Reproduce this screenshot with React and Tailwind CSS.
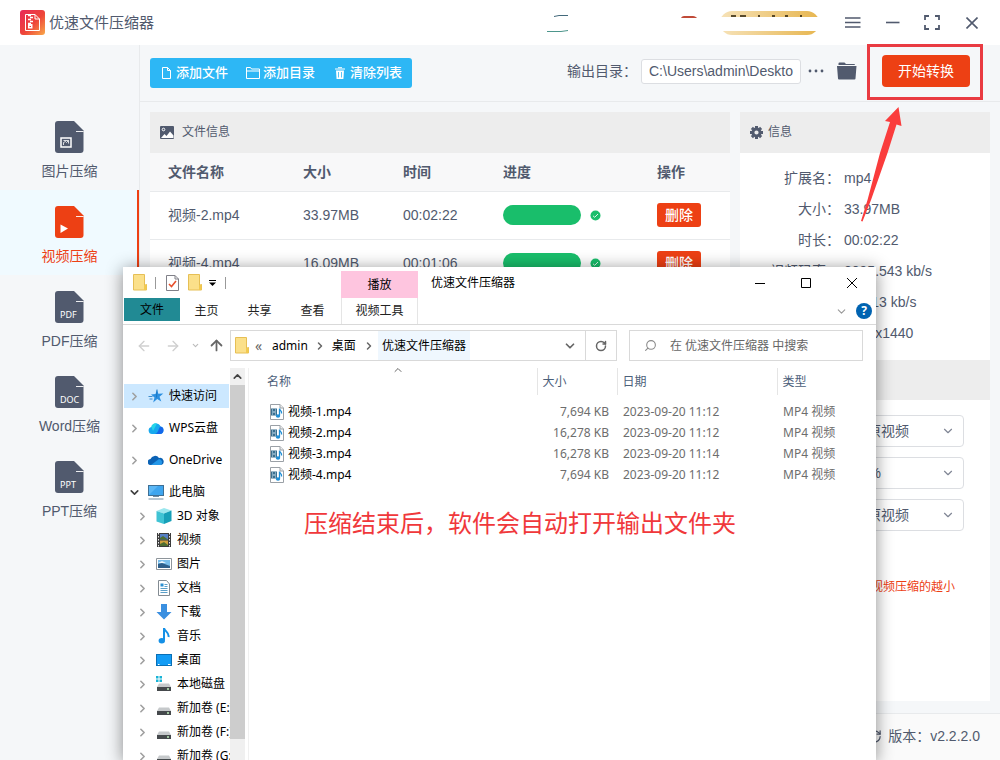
import { useState } from "react";
import {
  ArrowLeft,
  ArrowRight,
  ArrowUp,
  ChevronDown,
  ChevronRight,
  ChevronUp,
  RotateCw,
  RefreshCw,
  Search,
} from "lucide-react";

const sideItems = [
  { name: "图片压缩", kind: "image" },
  { name: "视频压缩", kind: "video" },
  { name: "PDF压缩", kind: "PDF" },
  { name: "Word压缩", kind: "DOC" },
  { name: "PPT压缩", kind: "PPT" },
];

const queue = [
  { name: "视频-2.mp4", size: "33.97MB", time: "00:02:22" },
  { name: "视频-4.mp4", size: "16.09MB", time: "00:01:06" },
];

const info = [
  ["扩展名", "mp4"],
  ["大小", "33.97MB"],
  ["时长", "00:02:22"],
  ["视频码率", "2095.543 kb/s"],
  ["音频码率", "128.13 kb/s"],
  ["分辨率", "2560x1440"],
];

const selects = [
  { label: "分辨率", value: "同原视频" },
  { label: "视频质量", value: "80%" },
  { label: "帧率", value: "同原视频" },
];

const roots = [
  { name: "快速访问", icon: "star", active: true },
  { name: "WPS云盘", icon: "wps" },
  { name: "OneDrive", icon: "onedrive" },
  { name: "此电脑", icon: "pc", open: true },
];

const children = [
  { name: "3D 对象", icon: "cube" },
  { name: "视频", icon: "film" },
  { name: "图片", icon: "picture" },
  { name: "文档", icon: "doc" },
  { name: "下载", icon: "down" },
  { name: "音乐", icon: "music" },
  { name: "桌面", icon: "desktop" },
  { name: "本地磁盘", icon: "system" },
  { name: "新加卷 (E:)", icon: "drive" },
  { name: "新加卷 (F:)", icon: "drive" },
  { name: "新加卷 (G:)", icon: "drive" },
];

const files = [
  { name: "视频-1.mp4", size: "7,694 KB", date: "2023-09-20 11:12" },
  { name: "视频-2.mp4", size: "16,278 KB", date: "2023-09-20 11:12" },
  { name: "视频-3.mp4", size: "16,278 KB", date: "2023-09-20 11:14" },
  { name: "视频-4.mp4", size: "7,694 KB", date: "2023-09-20 11:12" },
];

function Logo() {
  return (
    <svg width="25" height="25" viewBox="0 0 25 25">
      <defs>
        <linearGradient id="logo" x1="0" y1="0" x2="1" y2="1">
          <stop offset="0" stopColor="#e8285a" />
          <stop offset="0.55" stopColor="#ee4639" />
          <stop offset="1" stopColor="#f9a94a" />
        </linearGradient>
      </defs>
      <rect width="25" height="25" rx="3" fill="url(#logo)" />
      <path d="M5.500 4.500H15L19.500 9V20.500H5.500Z" fill="none" stroke="#fff" />
      <path d="M15 4.500V9H19.500" fill="none" stroke="#fff" />
      <path d="M8 5.500h3M10 7.500h3M8 9.500h3M10 11.500h3M8 13.500h3" stroke="#fff" strokeWidth="1.300" />
      <path d="M8 14h4.500v4.500H8z" fill="#fff" />
      <path d="M9.500 16.500h1.500" stroke="#e8383d" />
    </svg>
  );
}

function SideIcon({ kind, active }) {
  return (
    <svg width="29" height="32" viewBox="0 0 29 32">
      <path
        d="M3 0H19L28.500 9.500V29a3 3 0 0 1-3 3H3a3 3 0 0 1-3-3V3a3 3 0 0 1 3-3Z"
        fill={active ? "#ed4014" : "#515a6e"}
      />
      <path d="M21 10.500H28.500" stroke="#fff" strokeWidth="0.900" />
      {kind === "image" && (
        <>
          <rect x="6" y="17" width="10" height="9" fill="none" stroke="#fff" strokeWidth="1.500" />
          <path d="M8.500 24v-2.500l2-1 1 1 2-2M8.500 19.500h5v3" stroke="#fff" strokeWidth="0.800" fill="none" />
        </>
      )}
      {kind === "video" && <path d="M5.500 18.500L13 22.500L5.500 27Z" fill="#fff" />}
      {kind.length === 3 && (
        <text x="5" y="27" fontSize="9" fill="#fff" fontFamily="Noto Sans, sans-serif">
          {kind}
        </text>
      )}
    </svg>
  );
}

function FolderIcon() {
  return (
    <svg width="14" height="17" viewBox="0 0 14 17" className="shrink-0">
      <path d="M.5.5h11v11l2-1v5.500H.5z" fill="#fbe08a" stroke="#e6bf55" />
      <path d="M11 16v-4.500l2.500-1.500V16z" fill="#f2c94f" />
    </svg>
  );
}

function CheckDocIcon() {
  return (
    <svg width="13" height="16" viewBox="0 0 13 16" className="shrink-0">
      <path d="M.5.5H9L12.500 4V15.500H.5Z" fill="#fff" stroke="#808088" />
      <path d="M9 .5V4h3.500" fill="none" stroke="#808088" />
      <path d="M3 9l2.500 2.500L10 6" fill="none" stroke="#e8502c" strokeWidth="1.600" />
    </svg>
  );
}

function VideoFileIcon() {
  return (
    <svg width="14" height="16" viewBox="0 0 14 16" className="shrink-0">
      <path d="M.5.5H10L13.500 4V15.500H.5Z" fill="#fff" stroke="#9aa0a6" />
      <path d="M10 .5V4h3.500" fill="#eee" stroke="#9aa0a6" />
      <path d="M1 4.500h6v7H1z" fill="#3b6f8f" />
      <path d="M2 6h1M5 6h1M2 8h4M2 10h1M5 10h1" stroke="#cfe6f2" />
      <path d="M9.500 11.500V4.500c0 2 2.800 2.200 2 5" fill="none" stroke="#1f8fd6" strokeWidth="1.300" />
      <ellipse cx="8" cy="12" rx="2.200" ry="1.800" fill="#1f8fd6" />
    </svg>
  );
}

function NavIcon({ icon }) {
  return (
    <svg width="16" height="16" viewBox="0 0 16 16" className="shrink-0">
      {icon === "star" && (
        <>
          <path d="M9 1.500l1.300 4.300 5-.3-3.800 3.200 1.800 4.800-4.100-2.600-4 3.600 1.300-5L3 6.500l4.500-.6z" fill="#2b8fe0" />
          <path d="M.5 8.500h4M1.500 11h3M9 1.500l-.5 8" stroke="#1672bd" strokeWidth="0.800" />
        </>
      )}
      {icon === "wps" && (
        <>
          <path d="M4 14a3.600 3.600 0 0 1-.6-7.100A4.800 4.800 0 0 1 12.500 6.500 3.800 3.800 0 0 1 12 14Z" fill="#17a9ee" />
          <path d="M7 14c4-1 3-6 5.500-7.500A3.800 3.800 0 0 1 12 14Z" fill="#1467ea" />
          <path d="M3.400 6.900A4.800 4.800 0 0 1 9 3.400L5 11z" fill="#25d5e8" />
        </>
      )}
      {icon === "onedrive" && (
        <>
          <path d="M3 13a3 3 0 0 1-.5-6A4.800 4.800 0 0 1 11 6a3.600 3.600 0 0 1 2 7Z" fill="#0b62b5" />
          <path d="M3 13l8-6a3.500 3.500 0 0 1 2 6Z" fill="#2497e8" />
        </>
      )}
      {icon === "pc" && (
        <>
          <rect x=".5" y="1.500" width="15" height="10" fill="#5bb7f5" stroke="#3f6f94" />
          <path d="M1 11L10 2h5v9z" fill="#3ea5ef" />
          <path d="M5 12.500h6M.5 15h15" stroke="#6f8ca5" />
        </>
      )}
      {icon === "cube" && (
        <>
          <path d="M8 0l7.500 2.500L8 5.500.5 3z" fill="#9be7ee" />
          <path d="M.5 3L8 5.500V16L.5 13.500z" fill="#3fc3d4" />
          <path d="M15.500 2.500L8 5.500V16l7.500-3z" fill="#17a0b8" />
        </>
      )}
      {icon === "film" && (
        <>
          <path d="M1 1h14v14H1z" fill="#3c3c3c" />
          <path d="M2.500 1v14M13.500 1v14" stroke="#eee" strokeDasharray="1.500 1.500" />
          <path d="M4 2h8v5.500H4z" fill="#557fc4" />
          <path d="M4 8.500h8V14H4z" fill="#d0a13c" />
          <path d="M4 6l3-2 5 3.500H4zM4 12l4-2 4 3v1H4z" fill="#4e6e31" />
        </>
      )}
      {icon === "picture" && (
        <>
          <path d="M.5 2.500h15v11H.5z" fill="#fff" stroke="#8e959b" />
          <path d="M2 4h12v8H2z" fill="#77bdeb" />
          <path d="M2 8l4-1 8 3v2H2z" fill="#2d5f8b" />
          <path d="M2 7l4-2 4 2z" fill="#e8f6ff" />
        </>
      )}
      {icon === "doc" && (
        <>
          <path d="M2.500.5h8L13.500 4v11.500h-11z" fill="#fff" stroke="#838b92" />
          <path d="M4.500 8.500h7M4.500 10.500h7M4.500 12.500h7M8.500 4.500h3M8.500 6.500h3" stroke="#5b9fc8" />
          <path d="M4.500 3.500h3v3h-3z" fill="#2b8fd0" />
        </>
      )}
      {icon === "down" && <path d="M5 0h6v8h4.500L8 15.500.5 8H5z" fill="#3a8fe0" />}
      {icon === "music" && (
        <>
          <path d="M8 12V0c.5 3.500 5.500 4 4.500 9" fill="none" stroke="#1590e6" strokeWidth="2" />
          <ellipse cx="5.800" cy="12.700" rx="3.200" ry="2.700" fill="#1590e6" />
        </>
      )}
      {icon === "desktop" && (
        <>
          <rect x=".5" y="2.500" width="15" height="11" fill="#139cf5" stroke="#0a6fb5" />
          <path d="M2 12.500h1.500M12 12.500h2.500" stroke="#fff" />
        </>
      )}
      {(icon === "system" || icon === "drive") && (
        <>
          <path d="M3 7.500h10l2 3.500H1z" fill="#c6c9cb" />
          <path d="M1 11h14v4H1z" fill="#45494c" />
          <circle cx="12" cy="13" r="1" fill="#bff0bb" />
        </>
      )}
      {icon === "system" && (
        <path d="M0 0h2.500v2.500H0zM3.500 0H6v2.500H3.500zM0 3.500h2.500V6H0zM3.500 3.500H6V6H3.500z" fill="#17b3d6" />
      )}
    </svg>
  );
}

function TitleBar() {
  return (
    <header className="flex h-[45px] shrink-0 items-center bg-white pl-5">
      <Logo />
      <h1 className="ml-1 text-[15px]">优速文件压缩器</h1>
      <div className="ml-auto flex items-center">
        <svg width="24" height="20" viewBox="0 0 24 20" className="mr-[111px]">
          <path d="M8 3.500L13 2.500H22" fill="none" stroke="#43697b" />
          <path d="M1 18.500h14l7-1" fill="none" stroke="#4d968c" />
        </svg>
        <svg width="16" height="16" viewBox="0 0 16 16" className="mr-[22px]">
          <path d="M0 3C1 1 3 1 4 1h8c2 0 3 1 4 2z" fill="#c04a38" />
        </svg>
        <svg width="101" height="24" viewBox="0 0 101 24">
          <defs>
            <linearGradient id="gold">
              <stop offset="0" stopColor="#f6e2b8" />
              <stop offset="1" stopColor="#e7b650" />
            </linearGradient>
          </defs>
          <rect x="1" width="99" height="24" rx="12" fill="url(#gold)" />
          <path d="M0 6h101v14H0z" fill="#fff" />
          <path d="M12 5h5M21 5h6M39 5h2M53 5h3M66 5h3M81 5h2" stroke="#33270f" strokeWidth="2" opacity="0.800" />
        </svg>
        <button aria-label="菜单" className="ml-[25px]">
          <svg width="16" height="12" viewBox="0 0 16 12" stroke="#515a6e" strokeWidth="1.600">
            <path d="M0 1h15.500M0 5.500h15.500M0 10h15.500" />
          </svg>
        </button>
        <button aria-label="最小化" className="ml-[25px]">
          <svg width="14" height="12" viewBox="0 0 14 12" stroke="#515a6e" strokeWidth="1.600">
            <path d="M0 5.500h13.500" />
          </svg>
        </button>
        <button aria-label="最大化" className="ml-6">
          <svg width="16" height="15" viewBox="0 0 16 15" fill="none" stroke="#515a6e" strokeWidth="1.800">
            <path d="M1 5V1h4M11 1h4v4M15 10v4h-4M5 14H1v-4" />
          </svg>
        </button>
        <button aria-label="关闭" className="mr-[22px] ml-[26px]">
          <svg width="12" height="12" viewBox="0 0 12 12" stroke="#515a6e" strokeWidth="1.600">
            <path d="M.5.5l11 11M11.500.5l-11 11" />
          </svg>
        </button>
      </div>
    </header>
  );
}

function Toolbar() {
  const [dir, setDir] = useState("C:\\Users\\admin\\Deskto");

  return (
    <div className="flex h-[57px] shrink-0 items-center border-b border-[#e8eaec] pr-[30px] pl-[10px]">
      <div className="flex h-[30px] items-center rounded-[3px] bg-[#2db7f5] text-[13px] font-medium text-white">
        <button className="flex items-center gap-[5px] pl-3">
          <svg width="9" height="12" viewBox="0 0 9 12" fill="none" stroke="#fff">
            <path d="M.5.5h5l3 3v8h-8zM5.500.5v3h3" />
          </svg>
          添加文件
        </button>
        <button className="flex items-center gap-[3px] pl-[18px]">
          <svg width="14" height="12" viewBox="0 0 14 12" fill="none" stroke="#fff">
            <path d="M.5 11.500V.5h4l1 1.500h8v9.500zM.5 4h13" />
          </svg>
          添加目录
        </button>
        <button className="flex items-center gap-[5px] pr-[10px] pl-5">
          <svg width="10" height="12" viewBox="0 0 10 12">
            <path d="M0 2h10M3 .7h4" stroke="#fff" />
            <path d="M1 3.500h8l-.6 8.500H1.600z" fill="#fff" />
            <path d="M3.500 5v5.500M6.500 5v5.500" stroke="#2db7f5" strokeWidth="0.800" />
          </svg>
          清除列表
        </button>
      </div>
      <div className="mb-1 ml-auto flex items-center">
        <label htmlFor="dir" className="pr-1">输出目录：</label>
        <input
          id="dir"
          value={dir}
          onChange={(e) => setDir(e.target.value)}
          className="h-[25px] w-40 rounded-[3px] border border-[#dcdee2] bg-white pl-[7px] outline-none"
        />
        <button aria-label="更多" className="ml-[7px]">
          <svg width="16" height="4" viewBox="0 0 16 4" fill="#515a6e">
            <circle cx="2" cy="2" r="1.400" />
            <circle cx="8" cy="2" r="1.400" />
            <circle cx="14" cy="2" r="1.400" />
          </svg>
        </button>
        <button aria-label="打开目录" className="ml-[13px]">
          <svg width="20" height="18" viewBox="0 0 20 18" fill="#515a6e">
            <path d="M1.500 3V1.500a1 1 0 0 1 1-1h5L9 2h8a1 1 0 0 1 1 1z" />
            <path d="M0 4h19.500L18.500 16.500a1 1 0 0 1-1 1H2a1 1 0 0 1-1-1z" />
          </svg>
        </button>
        <div className="relative ml-[25px]">
          <button className="h-8 w-[88px] rounded bg-[#ed4014] text-white">开始转换</button>
          {/* highlight frame and the arrow that points at it */}
          <div className="pointer-events-none absolute -top-[11px] -right-[13px] -bottom-[13px] -left-[15px] border-[3px] border-[#e93b42]" />
          <svg
            width="44"
            height="118"
            viewBox="0 0 44 118"
            className="pointer-events-none absolute top-[50px] -left-[23px]"
          >
            <path d="M39.500 2L42.500 21L37.500 19.500L28.500 48L12 95L3.500 116.500L2 116L8.500 95L21 48L31 17L26 16Z" fill="#fa3c3c" />
          </svg>
        </div>
      </div>
    </div>
  );
}

function Queue() {
  return (
    <section className="min-w-0 flex-1 bg-white">
      <h2 className="flex h-[41px] items-center gap-2 bg-[#ededed] pb-px pl-[10px] text-xs">
        <svg width="14" height="13" viewBox="0 0 14 13">
          <rect width="14" height="13" rx="1" fill="#515a6e" />
          <circle cx="3.500" cy="3.500" r="1.300" fill="none" stroke="#fff" />
          <path d="M1 12l3.500-4 2 2L10 5.500l3.500 4V12z" fill="#fff" />
        </svg>
        文件信息
      </h2>
      <table className="w-full table-fixed border-collapse text-left">
        <thead>
          <tr className="h-[38px] border-b border-[#e8eaec] bg-[#f8f8f9]">
            <th className="w-[135px] pl-[18px] font-bold">文件名称</th>
            <th className="w-[100px] pl-[18px] font-bold">大小</th>
            <th className="w-[100px] pl-[18px] font-bold">时间</th>
            <th className="pl-[18px] font-bold">进度</th>
            <th className="w-[91px] pl-[18px] font-bold">操作</th>
          </tr>
        </thead>
        <tbody>
          {queue.map((row) => (
            <tr key={row.name} className="h-12 border-b border-[#e8eaec]">
              <td className="pl-[18px]">{row.name}</td>
              <td className="pl-[18px]">{row.size}</td>
              <td className="pl-[18px]">{row.time}</td>
              <td className="pl-[18px]">
                <div className="flex items-center gap-[9px]">
                  <div className="h-5 w-[78px] rounded-full bg-[#19be6b]" />
                  <svg width="11" height="11" viewBox="0 0 11 11">
                    <circle cx="5.500" cy="5.500" r="5" fill="#19be6b" />
                    <path d="M3 5.800l1.700 1.500L8 4" fill="none" stroke="#d9f7e6" />
                  </svg>
                </div>
              </td>
              <td className="pl-[18px]">
                <button className="block h-6 w-11 rounded-[3px] bg-[#ed4014] font-medium text-white">删除</button>
              </td>
            </tr>
          ))}
        </tbody>
      </table>
    </section>
  );
}

function GearIcon() {
  return (
    <svg width="13" height="13" viewBox="0 0 13 13">
      <circle cx="6.500" cy="6.500" r="3.600" fill="none" stroke="#515a6e" strokeWidth="3" />
      <path
        d="M6.500 0v2M6.500 11v2M0 6.500h2M11 6.500h2M1.900 1.900l1.400 1.400M9.700 9.700l1.400 1.400M1.900 11.100l1.400-1.400M9.700 3.300l1.400-1.400"
        stroke="#515a6e"
        strokeWidth="3"
      />
    </svg>
  );
}

function InfoPanel() {
  return (
    <section className="w-[250px] shrink-0 bg-white">
      <h2 className="flex h-[41px] items-center gap-[5px] bg-[#ededed] pb-px pl-[10px] text-xs">
        <GearIcon />
        信息
      </h2>
      <dl className="pt-[9px] pb-3">
        {info.map(([label, value]) => (
          <div key={label} className="flex h-[31px] items-center gap-1">
            <dt className="w-[100px] text-right">{label}：</dt>
            <dd>{value}</dd>
          </div>
        ))}
      </dl>
      <div className="h-10 bg-[#ededed]" />
      <div className="flex flex-col items-end gap-[10px] pt-[15px] pr-[26px]">
        {selects.map((s) => (
          <div key={s.label} className="relative">
            <select
              aria-label={s.label}
              className="block h-8 w-[120px] appearance-none rounded border border-[#dcdee2] bg-white pl-2 outline-none"
            >
              <option>{s.value}</option>
            </select>
            <ChevronDown size={14} color="#808695" className="pointer-events-none absolute top-[9px] right-[9px]" />
          </div>
        ))}
      </div>
      <p className="mt-12 pr-[35px] text-right text-xs text-[#ed4014]">视频压缩的越小</p>
    </section>
  );
}

function Tree() {
  return (
    <nav className="flex w-[107px] shrink-0 flex-col overflow-hidden pt-4 pr-px pl-px whitespace-nowrap">
      <div className="flex flex-col gap-2">
        {roots.map((r) => (
          <a
            key={r.name}
            href="#"
            className={
              r.active
                ? "flex h-6 items-center bg-[#cce8ff] pl-1"
                : "flex h-6 items-center pl-1"
            }
          >
            {r.open ? (
              <ChevronDown size={13} color="#404040" strokeWidth={3} className="shrink-0" />
            ) : (
              <ChevronRight size={13} color="#a0a0a0" strokeWidth={3} className="shrink-0" />
            )}
            <span className="mr-[5px] ml-[7px]">
              <NavIcon icon={r.icon} />
            </span>
            {r.name}
          </a>
        ))}
      </div>
      {children.map((c) => (
        <a key={c.name} href="#" className="flex h-6 shrink-0 items-center pl-3">
          <ChevronRight size={13} color="#a0a0a0" strokeWidth={3} className="shrink-0" />
          <span className="mr-[5px] ml-[7px]">
            <NavIcon icon={c.icon} />
          </span>
          {c.name}
        </a>
      ))}
    </nav>
  );
}

function FileTable() {
  return (
    <table className="w-full table-fixed border-collapse text-left">
      <thead>
        <tr className="h-[27px] text-[#4c607a]">
          <th className="relative border-r border-[#e5e5e5] pl-[18px] font-normal">
            名称
            <ChevronUp size={12} color="#666" strokeWidth={2} className="absolute -top-1 left-[143px]" />
          </th>
          <th className="w-20 border-r border-[#e5e5e5] pl-[5px] font-normal">大小</th>
          <th className="w-40 border-r border-[#e5e5e5] pl-[5px] font-normal">日期</th>
          <th className="w-[99px] pl-[5px] font-normal">类型</th>
        </tr>
      </thead>
      <tbody className="text-[#6d6d6d] before:block before:h-[6px] before:content-['']">
        {files.map((f) => (
          <tr key={f.name} className="h-[21px]">
            <td className="pl-[21px] text-black">
              <div className="flex items-center gap-1">
                <VideoFileIcon />
                {f.name}
              </div>
            </td>
            <td className="pr-2 text-right">{f.size}</td>
            <td className="pl-[6px]">{f.date}</td>
            <td className="pl-[6px]">MP4 视频</td>
          </tr>
        ))}
      </tbody>
    </table>
  );
}

function Explorer() {
  return (
    <div className="absolute top-[267px] right-[124px] bottom-0 left-[123px] flex flex-col overflow-hidden bg-white font-['Noto_Sans','Noto_Sans_CJK_SC',sans-serif] text-xs leading-4 text-black">
      <div className="flex h-[31px] shrink-0">
        <div className="flex w-[218px] items-center pl-[10px]">
          <FolderIcon />
          <span className="mx-2 h-3 w-px bg-[#999]" />
          <span className="mr-[9px] ml-[2px]">
            <CheckDocIcon />
          </span>
          <FolderIcon />
          <svg width="9" height="6" viewBox="0 0 9 6" className="mr-2 ml-[6px]">
            <path d="M1 .5h7" stroke="#000" />
            <path d="M1 2.500h7L4.500 6z" />
          </svg>
          <span className="h-3 w-px bg-[#999]" />
        </div>
        <div className="mt-1 flex w-[77px] items-center justify-center bg-[#fec5df]">播放</div>
        <h2 className="flex items-center pl-[13px]">优速文件压缩器</h2>
        <div className="ml-auto flex items-center gap-[34px] pr-[18px]">
          <button aria-label="最小化">
            <svg width="12" height="12" viewBox="0 0 12 12" stroke="#000">
              <path d="M1 6.500h10" />
            </svg>
          </button>
          <button aria-label="最大化">
            <svg width="12" height="12" viewBox="0 0 12 12" stroke="#000" fill="none">
              <path d="M1.500 1.500h9v9h-9z" />
            </svg>
          </button>
          <button aria-label="关闭">
            <svg width="12" height="12" viewBox="0 0 12 12" stroke="#000">
              <path d="M1 1l10 10M11 1L1 11" />
            </svg>
          </button>
        </div>
      </div>

      <div className="flex h-[27px] shrink-0 items-start border-b border-[#d9d9d9] pl-px text-[#222]">
        <button className="h-[23px] w-14 bg-[#218a94] text-black">文件</button>
        <button className="h-[26px] w-[53px]">主页</button>
        <button className="h-[26px] w-[53px]">共享</button>
        <button className="h-[26px] w-[53px]">查看</button>
        <button className="ml-[2px] h-[26px] w-[77px] border-x border-[#e5e5e5]">视频工具</button>
        <div className="ml-auto flex h-[26px] items-center gap-2 pr-1">
          <ChevronDown size={13} color="#999" />
          <button
            aria-label="帮助"
            className="h-4 w-4 rounded-full bg-[#0063b1] text-center font-bold text-white"
          >
            ?
          </button>
        </div>
      </div>

      <div className="flex h-[43px] shrink-0 items-center px-[13px] pb-[2px]">
        <ArrowLeft size={16} color="#cfcfcf" />
        <ArrowRight size={16} color="#cfcfcf" className="ml-[13px]" />
        <ChevronDown size={9} color="#bbb" strokeWidth={3} className="ml-[10px]" />
        <ArrowUp size={17} color="#666" strokeWidth={2.5} className="ml-2" />
        <div className="ml-[5px] flex h-[31px] min-w-0 flex-1 items-center border border-[#d9d9d9]">
          <span className="mr-[6px] ml-1">
            <FolderIcon />
          </span>
          <span className="w-[17px] text-sm text-[#666]">«</span>
          <span>admin</span>
          <ChevronRight size={12} color="#666" strokeWidth={3} className="mx-[6px]" />
          <span>桌面</span>
          <ChevronRight size={12} color="#666" strokeWidth={3} className="ml-[7px]" />
          <span className="ml-[3px] flex h-[29px] items-center bg-[#eff7fe] px-1">优速文件压缩器</span>
          <ChevronDown size={14} color="#666" strokeWidth={3} className="mr-2 ml-auto" />
          <span className="flex h-full w-[31px] items-center justify-center border-l border-[#d9d9d9]">
            <RotateCw size={12} color="#666" strokeWidth={3} />
          </span>
        </div>
        <div className="ml-3 flex h-[31px] w-[234px] items-center border border-[#d9d9d9]">
          <Search size={13} color="#8a8a8a" strokeWidth={2} className="mr-[13px] ml-[14px] -scale-x-100" />
          <input
            aria-label="搜索"
            placeholder="在 优速文件压缩器 中搜索"
            className="min-w-0 flex-1 outline-none placeholder:text-[#666]"
          />
        </div>
      </div>

      <div className="flex min-h-0 flex-1">
        <Tree />
        <div className="flex w-[15px] shrink-0 flex-col items-center bg-[#f0f0f0]">
          <ChevronUp size={13} color="#444" className="my-[2px] shrink-0" strokeWidth={3} />
          <div className="mb-[21px] w-full flex-1 bg-[#cdcdcd]" />
        </div>
        <div className="ml-[3px] min-w-0 flex-1 border-l border-[#f0f0f0]">
          <FileTable />
          <p className="mt-[22px] pl-[55px] text-2xl leading-[32px] text-[#f0383b]">
            压缩结束后，软件会自动打开输出文件夹
          </p>
        </div>
      </div>
    </div>
  );
}

export default function App() {
  return (
    <div className="relative flex h-screen flex-col overflow-hidden bg-[#f5f7f9] font-['Liberation_Sans','Noto_Sans_CJK_SC',sans-serif] text-sm text-[#515a6e]">
      <TitleBar />
      <div className="flex min-h-0 flex-1">
        <aside className="flex w-[140px] shrink-0 flex-col border-r border-[#e8eaec] pt-[60px]">
          {sideItems.map((item) => (
            <button
              key={item.kind}
              className={
                item.kind === "video"
                  ? "flex h-[85px] flex-col items-center gap-2 border-r-2 border-[#ed4014] bg-[#f0faff] pt-4 pl-[2px] text-[#ed4014]"
                  : "flex h-[85px] flex-col items-center gap-2 pt-4"
              }
            >
              <SideIcon kind={item.kind} active={item.kind === "video"} />
              {item.name}
            </button>
          ))}
        </aside>
        <main className="flex min-w-0 flex-1 flex-col">
          <Toolbar />
          <div className="flex min-h-0 flex-1 gap-[10px] px-[10px] pt-[10px] pb-3">
            <Queue />
            <InfoPanel />
          </div>
          <footer className="flex h-[47px] shrink-0 items-center justify-end gap-[6px] border-t border-[#e8eaec] bg-[#fafafa] pr-5 pb-[2px]">
            <RefreshCw size={15} />
            版本：v2.2.2.0
          </footer>
        </main>
      </div>
      {/* the shadow sits on its own box, the window itself clips its content */}
      <div className="pointer-events-none absolute top-[267px] right-[124px] bottom-0 left-[123px] shadow-[0_2px_16px_rgba(0,0,0,0.45)]" />
      <Explorer />
    </div>
  );
}
